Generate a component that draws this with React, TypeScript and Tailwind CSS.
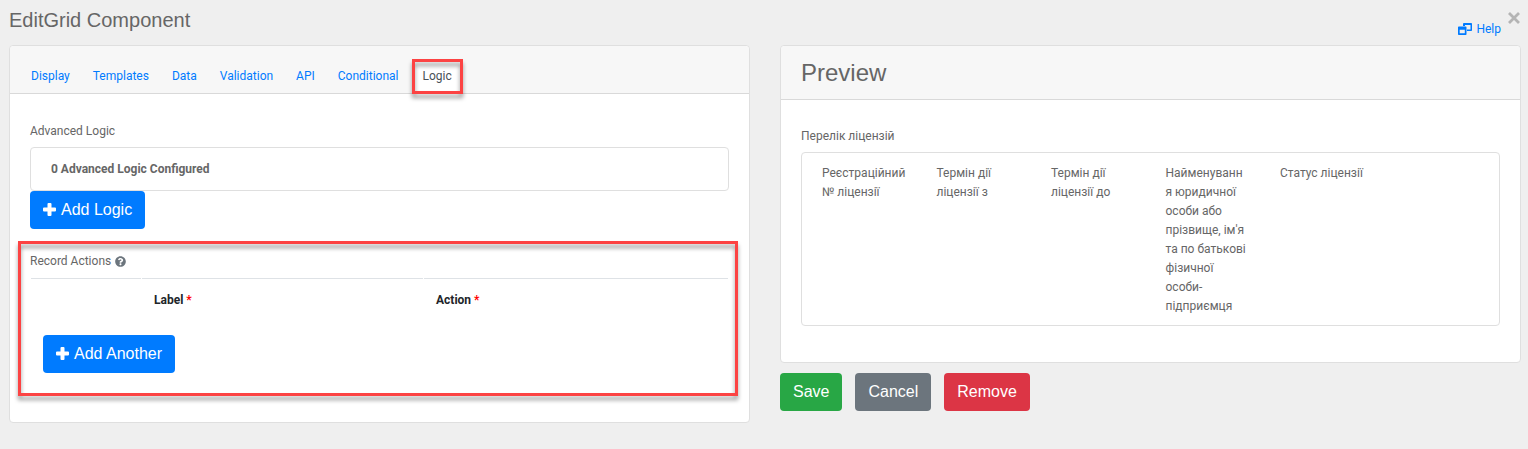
import type { ReactNode } from "react";
import { FaQuestionCircle } from "react-icons/fa";

const tabs = ["Display", "Templates", "Data", "Validation", "API", "Conditional", "Logic"];

const columns = [
  "Реєстраційний № ліцензії",
  "Термін дії ліцензії з",
  "Термін дії ліцензії до",
  "Найменуванн\nя юридичної особи або прізвище, ім'я та по батькові фізичної особи-підприємця",
  "Статус ліцензії",
];

function Highlight({ className }: { className: string }) {
  return (
    <span
      aria-hidden="true"
      className={`pointer-events-none absolute border-3 border-[#fc4343] drop-shadow-[0_4px_2px_rgba(0,0,0,0.4)] ${className}`}
    />
  );
}

function Button({ color, children }: { color: string; children: ReactNode }) {
  return (
    <button
      type="button"
      className={`inline-flex h-[38px] items-center gap-1 rounded px-[13px] font-['Liberation_Sans',Arial,sans-serif] text-base text-white ${color}`}
    >
      {children}
    </button>
  );
}

function PlusIcon() {
  return (
    <svg viewBox="0 0 14 14" className="size-3.5" fill="currentColor" aria-hidden="true">
      <path d="M5.5 0h2q1 0 1 1v3.5H12q1 0 1 1v2q0 1-1 1H8.5V12q0 1-1 1h-2q-1 0-1-1V8.5H1q-1 0-1-1v-2q0-1 1-1h3.5V1q0-1 1-1Z" />
    </svg>
  );
}

function WindowRestoreIcon() {
  return (
    <svg viewBox="0 0 14 12" className="h-3 w-3.5" fill="currentColor" aria-hidden="true">
      <path
        fillRule="evenodd"
        d="M6 0h7.2q.8 0 .8.8v6.4q0 .8-.8.8H9V6.5h3.500V2H7v1H5V.8Q5 0 6 0Z"
      />
      <path fillRule="evenodd" d="M.8 3.500h6.900q.8 0 .8.8v6.900q0 .8-.8.8H.8q-.8 0-.8-.8V4.300q0-.8.8-.8ZM1.700 6.800v3.500h5.100V6.800Z" />
    </svg>
  );
}

function Required() {
  return <span className="text-[#ff0000]">*</span>;
}

export default function App() {
  return (
    <div className="min-h-screen bg-[#efefef] pr-[7px] pl-[9px] font-[Roboto,'Noto_Sans',sans-serif] text-xs leading-[19px] text-[#666]">
      <header className="flex h-[45px] justify-between">
        <h1 className="pt-1.5 font-['Liberation_Sans',Arial,sans-serif] text-xl leading-7">EditGrid Component</h1>
        <div className="flex items-start gap-[7px]">
          <div className="flex h-[45px] items-end pb-1.5">
            <a href="#help" className="flex items-start gap-1 text-[#007bff]">
              <span className="pt-[3px]">
                <WindowRestoreIcon />
              </span>
              Help
            </a>
          </div>
          <button type="button" aria-label="Close" className="mt-3 text-[#b4b4b4]">
            <svg viewBox="0 0 13 12" className="h-3 w-[13px]" stroke="currentColor" strokeWidth="2.800" aria-hidden="true">
              <path d="M1 1l10 10M11 1L1 11" />
            </svg>
          </button>
        </div>
      </header>

      <main className="grid grid-cols-2 items-start gap-[30px]">
        <section className="rounded border border-[#dfdfdf] bg-white">
          <nav className="flex items-end gap-px rounded-t border-b border-[#d9d9d9] bg-[#f7f7f7] px-2.5 pt-[13px]">
            {tabs.map((tab) =>
              tab === "Logic" ? (
                <a
                  key={tab}
                  href="#logic"
                  aria-current="page"
                  className="relative -mb-px ml-px flex h-[35px] items-center bg-white px-[11px] text-[#495057]"
                >
                  {tab}
                  <Highlight className="inset-0" />
                </a>
              ) : (
                <a key={tab} href={`#${tab.toLowerCase()}`} className="flex h-[34px] items-center px-[11px] text-[#007bff]">
                  {tab}
                </a>
              ),
            )}
          </nav>

          <div className="px-5 pt-7 pb-[26px]">
            <h2 className="mb-1.5">Advanced Logic</h2>
            <div className="flex h-11 items-center rounded border border-[#dfdfdf] px-5 font-bold">
              0 Advanced Logic Configured
            </div>
            <Button color="bg-[#007bff]">
              <PlusIcon />
              Add Logic
            </Button>

            <div className="relative mt-3 pt-[11px] pb-[23px]">
              <Highlight className="-right-[9px] -left-3 inset-y-0" />
              <h2 className="mb-[7px] flex items-center gap-1">
                Record Actions
                <FaQuestionCircle className="size-[11px] text-[#6c757d]" />
              </h2>
              <table className="w-full table-fixed border-separate border-spacing-x-px border-spacing-y-0 text-left">
                <colgroup>
                  <col className="w-[110px]" />
                  <col className="w-[281px]" />
                  <col />
                </colgroup>
                <thead>
                  <tr className="text-[#212529]">
                    <th aria-label="Row" className="border-t border-[#dee2e6] p-3" />
                    <th className="border-t border-[#dee2e6] p-3">
                      Label <Required />
                    </th>
                    <th className="border-t border-[#dee2e6] p-3">
                      Action <Required />
                    </th>
                  </tr>
                </thead>
                <tbody>
                  <tr>
                    <td colSpan={3} className="px-3 pt-[13px]">
                      <Button color="bg-[#007bff]">
                        <PlusIcon />
                        Add Another
                      </Button>
                    </td>
                  </tr>
                </tbody>
              </table>
            </div>
          </div>
        </section>

        <div>
          <section className="rounded border border-[#dfdfdf] bg-white">
            <h2 className="rounded-t border-b border-[#d9d9d9] bg-[#f7f7f7] px-5 py-3 font-['Liberation_Sans',Arial,sans-serif] text-2xl leading-[29px]">
              Preview
            </h2>
            <div className="px-5 pt-[27px] pb-9">
              <h3 className="mb-1.5">Перелік ліцензій</h3>
              <div className="grid grid-cols-6 gap-[30px] rounded border border-[#dfdfdf] px-5 pt-[11px] pb-[9px]">
                {columns.map((column) => (
                  <div key={column} className="whitespace-pre-line wrap-break-word">
                    {column}
                  </div>
                ))}
              </div>
            </div>
          </section>
          <div className="mt-2.5 flex gap-[13px]">
            <Button color="bg-[#28a745]">Save</Button>
            <Button color="bg-[#6c757d]">Cancel</Button>
            <Button color="bg-[#dc3545]">Remove</Button>
          </div>
        </div>
      </main>
    </div>
  );
}
